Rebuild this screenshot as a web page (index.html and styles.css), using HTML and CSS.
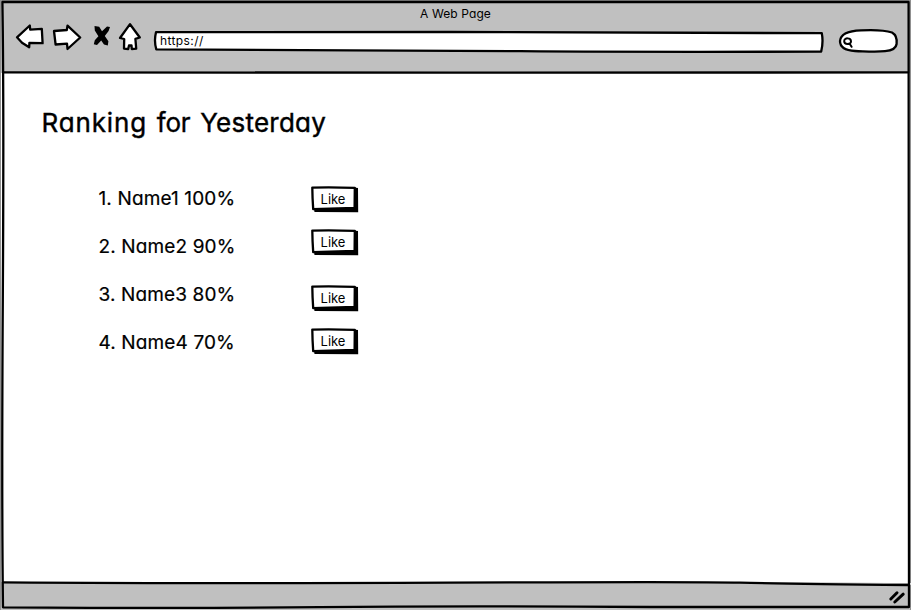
FILE: index.html
```html
<!DOCTYPE html>
<html lang="en">
<head>
<meta charset="utf-8">
<title>A Web Page</title>
<link rel="stylesheet" href="styles.css">
</head>
<body>
<svg width="0" height="0" class="defs">
  <symbol id="sketch-button" viewBox="0 0 49 28">
    <path d="M44 2.5L48 3L48.2 27.2L4.5 27L4 24L44 23Z"/>
    <path class="ink" d="M2.3 2.6Q22 2 44.8 2.9L44.6 23Q25 23.6 3.2 24.2Q2.4 13 2.3 2.6Z"/>
  </symbol>
</svg>
<div class="window">
  <header class="chrome">
    <div class="caption">A Web Page</div>
    <div class="toolbar">
      <svg class="nav" width="140" height="36" viewBox="10 20 140 36">
        <g class="ink">
          <path d="M17 37.3L29.8 25.5L30.2 29.7L41.8 28.8L42.6 43.2L29.4 42.8L29.2 47.3L22 42.7Z"/>
          <path d="M54 31L66.8 30L67.5 25.7L80.2 37.5L67.5 49L67 43.6L55.6 44.5Z"/>
          <path d="M130 24.2L139.8 37.5L135.4 38.8L136.2 48.7L131.8 49L131.5 45.3L129 45.5L128.2 49L124 48.6L124.2 39L120 38Z"/>
        </g>
        <path class="cross" d="M94.5 26L99.2 26.8L102 31.2L107 26.4L110 27L108.6 31L104.8 36L108.4 41.2L107.8 45.4L104 44.6L101.2 40.6L97 45L93.8 44.2L94.8 40.3L98.4 36.2L94.8 30.6Z"/>
      </svg>
      <div class="address">
        <svg class="outline" width="672" height="24" viewBox="153 30 672 24"><path class="ink" d="M156 32.2Q280 31.5 450 32T821.8 33.2Q823.5 42 821.2 51.6Q650 52.2 520 51.2T350 50.3T156.3 49.3Q153.8 41 156 32.2Z"/></svg>
        <span class="url">https://</span>
      </div>
      <svg class="search" width="62" height="26" viewBox="838 28 62 26">
        <path class="ink" d="M840 41C840.5 33.5 848 30.8 861 30.3C875 29.6 886 30.5 892 32.5C896.5 35 897.2 39 896.6 44C896 49 892 50.5 885 51.2C875 52.3 868 51.5 855 51C846 50.5 840 48 840 41Z"/>
        <path class="lens" d="M844.2 41.2C844.2 37.4 851 37.4 851 41.4C851 45 844.2 44.8 844.2 41.2ZM849.8 44L851.6 46.8"/>
      </svg>
    </div>
  </header>
  <main class="page">
    <h1><span class="wide">Ranking</span> <span class="tight">for</span> <span class="even">Yesterday</span></h1>
    <ol class="ranking">
      <li>1. Name1 100%</li>
      <li>2. Name2 90%</li>
      <li>3. Name3 80%</li>
      <li>4. Name4 70%</li>
    </ol>
    <div class="likes">
      <button class="like"><svg width="49" height="28"><use href="#sketch-button"/></svg><span>Like</span></button>
      <button class="like"><svg width="49" height="28"><use href="#sketch-button"/></svg><span>Like</span></button>
      <button class="like apart"><svg width="49" height="28"><use href="#sketch-button"/></svg><span>Like</span></button>
      <button class="like"><svg width="49" height="28"><use href="#sketch-button"/></svg><span>Like</span></button>
    </div>
  </main>
  <footer class="status">
    <svg width="24" height="20" viewBox="886 588 24 20"><path class="grip" d="M890.8 599L897 592.8M894.8 602L903.2 594.2"/></svg>
  </footer>
  <svg class="frame" width="911" height="610" viewBox="0 0 911 610">
    <path class="margin" d="M0 .5H911M910.5 0V610M.5 0V610"/>
    <path class="below" d="M4 583L300 582.5Q600 580.5 820 582.2T908 584.8L908 580L4 580Z"/>
    <path class="line" d="M2.4 2H908.6L909 607H650Q450 605.8 320 607.2T3 607.3Q1.6 500 2.8 300T2.4 2Z"/>
    <path class="line" d="M3 72.3Q200 73.2 450 72.7T908 72.4M3 582.3Q200 583.6 450 582.6T740 582.6T908 585"/>
  </svg>
</div>
</body>
</html>
```
FILE: styles.css
```css
* { box-sizing: border-box; }
body {
  margin: 0;
  background: #fff;
  color: #000;
  font-family: Inter, "Liberation Sans", sans-serif;
  font-feature-settings: "cv11" 1, "calt" 0;
}
.defs { position: absolute; }
.window {
  position: relative;
  display: flex;
  flex-direction: column;
  width: 911px;
  height: 610px;
  overflow: hidden;
}
.chrome { height: 73px; background: #c0c0c0; }
.caption {
  padding-top: 6px;
  height: 20px;
  font-size: 12px;
  line-height: 16px;
  letter-spacing: .1px;
  text-align: center;
}
.toolbar { display: flex; padding-left: 10px; }
.nav { flex: none; }
.address {
  display: grid;
  width: 672px;
  height: 24px;
  margin: 10px 13px 0 3px;
}
.outline, .url { grid-area: 1 / 1; }
.url {
  padding: 2px 0 0 7px;
  font-size: 12px;
  line-height: 18px;
  letter-spacing: .4px;
}
.search { margin-top: 8px; }
.ink { fill: #fff; stroke: #000; stroke-width: 2.3; stroke-linejoin: round; }
.lens { fill: none; stroke: #000; stroke-width: 2; stroke-linecap: round; }
.cross { fill: #000; }
.page {
  flex: 1;
  display: grid;
  grid-template-columns: 212px 49px;
  grid-template-rows: auto 1fr;
  padding: 33px 0 0 98px;
}
h1 {
  grid-column: 1 / 3;
  margin: 0 0 0 -56.5px;
  font-size: 26px;
  line-height: 34px;
  font-weight: 400;
  letter-spacing: .45px;
  word-spacing: 2px;
  white-space: nowrap;
  -webkit-text-stroke: .4px #000;
}
.wide { letter-spacing: .85px; }
.tight { letter-spacing: -.2px; }
.even { letter-spacing: .25px; }
.ranking { margin: 35px 0 0; padding: 0; list-style: none; }
.ranking li {
  height: 48px;
  line-height: 48px;
  padding-left: .5px;
  font-size: 19px;
  letter-spacing: .13px;
  white-space: nowrap;
  -webkit-text-stroke: .2px #000;
}
.likes { display: flex; flex-direction: column; padding-top: 45px; gap: 15px; }
.like {
  display: grid;
  width: 49px;
  height: 28px;
  margin: 0;
  padding: 0;
  border: 0;
  background: none;
  color: #000;
  font: 13px/28px Inter, sans-serif;
}
.like svg, .like span { grid-area: 1 / 1; }
.like span { padding-right: 3px; }
.like.apart { margin-top: 13px; }
.status {
  display: flex;
  justify-content: flex-end;
  height: 28px;
  padding: 6px 1px 0 0;
  background: #c0c0c0;
}
.grip { fill: none; stroke: #000; stroke-width: 3; stroke-linecap: round; }
.frame { position: absolute; inset: 0; pointer-events: none; }
.margin { fill: none; stroke: #909090; }
.below { fill: #fff; }
.line { fill: none; stroke: #000; stroke-width: 2.3; stroke-linejoin: round; }
```
